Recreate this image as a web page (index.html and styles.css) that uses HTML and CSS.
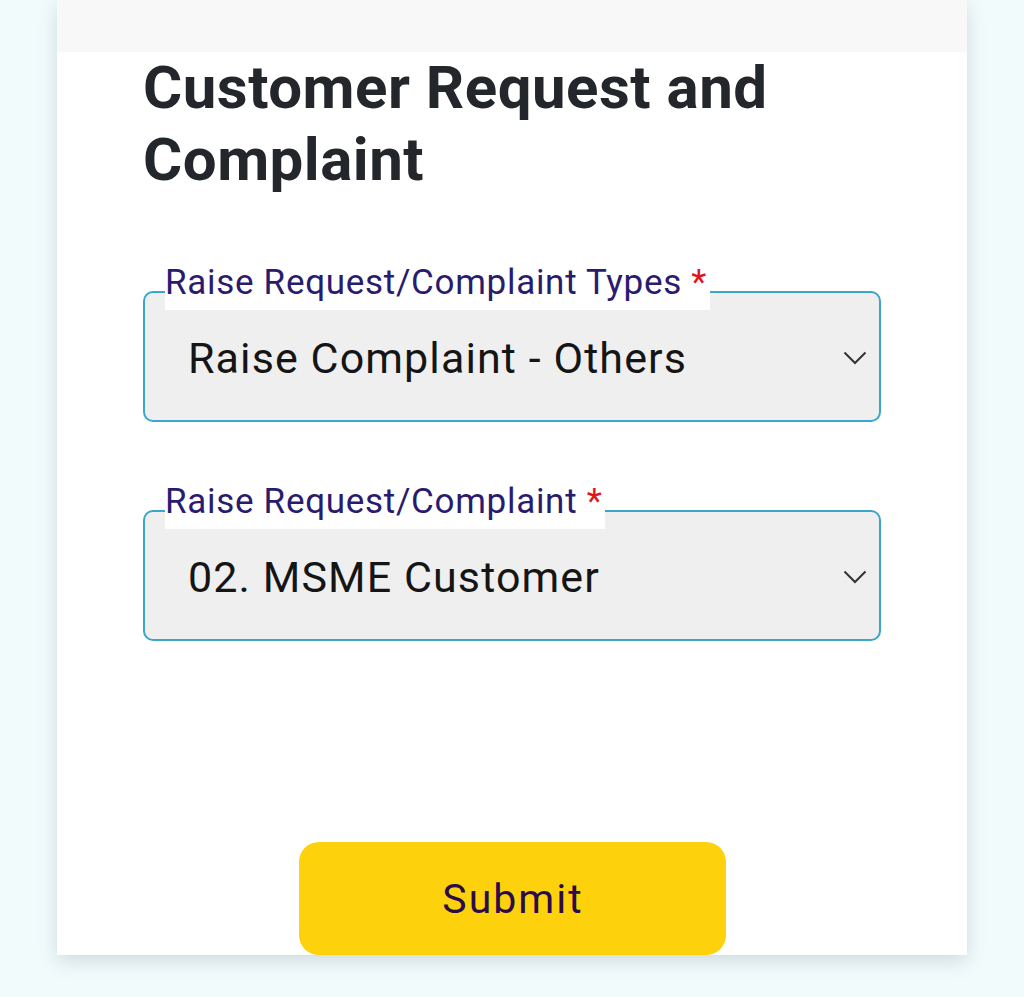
FILE: index.html
```html
<!DOCTYPE html>
<html>
<head>
<meta charset="utf-8">
<link rel="stylesheet" href="styles.css">
</head>
<body>
<div class="card">
  <div class="topband"></div>
  <div class="content">
    <h1 class="title">Customer Request and Complaint</h1>
    <div class="field field-first">
      <div class="label">Raise Request/Complaint Types <span class="req">*</span></div>
      <div class="select">
        <span class="value">Raise Complaint - Others</span>
        <svg class="chev" width="24" height="14" viewBox="0 0 24 14"><path d="M1.5 1.5 L12 12 L22.5 1.5" fill="none" stroke="#333" stroke-width="2"/></svg>
      </div>
    </div>
    <div class="field field-second">
      <div class="label">Raise Request/Complaint <span class="req">*</span></div>
      <div class="select">
        <span class="value">02. MSME Customer</span>
        <svg class="chev" width="24" height="14" viewBox="0 0 24 14"><path d="M1.5 1.5 L12 12 L22.5 1.5" fill="none" stroke="#333" stroke-width="2"/></svg>
      </div>
    </div>
    <div class="actions">
      <button class="submit">Submit</button>
    </div>
  </div>
</div>
</body>
</html>
```

FILE: styles.css
```css
html, body {
  margin: 0;
  padding: 0;
}
body {
  background: #f2fbfc;
  font-family: Roboto, "Liberation Sans", sans-serif;
  height: 997px;
  overflow: hidden;
}
.card {
  margin-left: 57px;
  width: 910px;
  height: 955px;
  background: #ffffff;
  box-shadow: 0 6px 18px rgba(40, 80, 90, 0.18);
  display: flex;
  flex-direction: column;
}
.topband {
  height: 52px;
  background: #f8f8f8;
}
.content {
  padding: 0 86px;
  display: flex;
  flex-direction: column;
}
.title {
  margin: 0;
  font-size: 60px;
  line-height: 72px;
  font-weight: 700;
  letter-spacing: 0.5px;
  color: #23262b;
}
.field {
  position: relative;
}
.field-first {
  margin-top: 95px;
}
.field-second {
  margin-top: 88px;
}
.label {
  position: absolute;
  top: -28px;
  left: 22px;
  background: #ffffff;
  color: #2a1b6e;
  font-size: 35px;
  line-height: 40px;
  letter-spacing: 0.7px;
  padding: 0 3px 7px 0;
  white-space: nowrap;
  z-index: 1;
}
.req {
  color: #e0141e;
}
.select {
  box-sizing: border-box;
  height: 131px;
  border: 2px solid #3aa6cc;
  border-radius: 10px;
  background: #efefef;
  display: flex;
  align-items: center;
  justify-content: space-between;
  padding: 2px 12px 0 43px;
}
.value {
  font-size: 43px;
  letter-spacing: 1.1px;
  color: #151515;
}
.chev {
  display: block;
}
.actions {
  display: flex;
  justify-content: center;
  margin-top: 201px;
}
.submit {
  width: 427px;
  height: 113px;
  border: none;
  border-radius: 20px;
  background: #fdd20d;
  color: #2c0b4b;
  font-family: Roboto, "Liberation Sans", sans-serif;
  font-size: 41px;
  letter-spacing: 2px;
  padding: 0 0 0 2px;
}
```
